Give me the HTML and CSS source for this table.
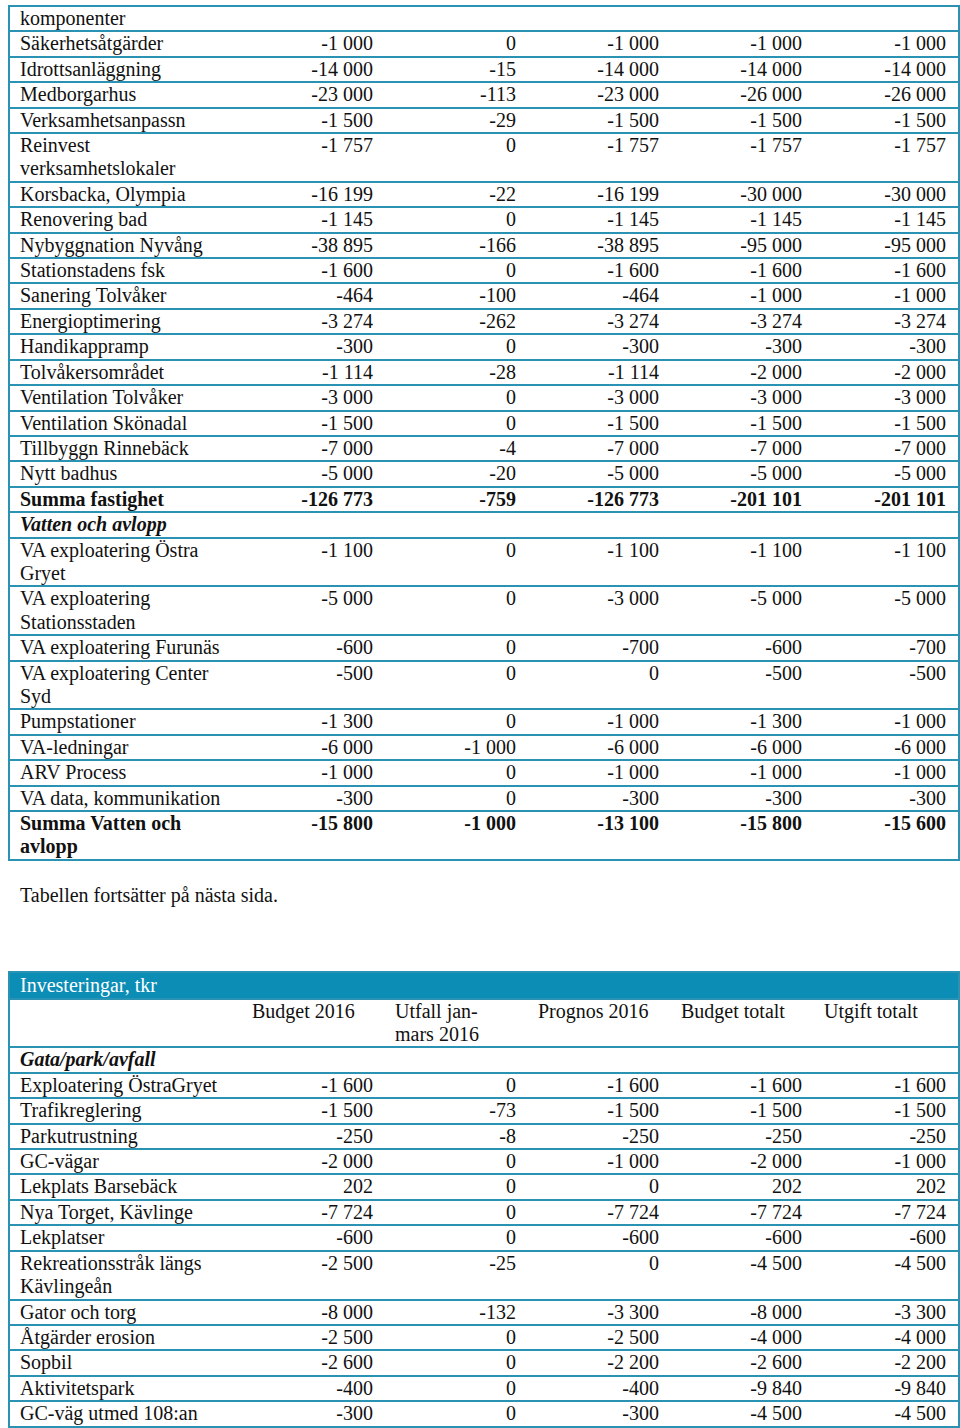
FILE: index.html
```html
<!DOCTYPE html>
<html lang="sv">
<head>
<meta charset="utf-8">
<title>Investeringar, tkr</title>
<link rel="stylesheet" href="styles.css">
</head>
<body>
<div class="page">
  <table class="budget">
    <colgroup>
      <col class="c-lbl"><col class="c-num"><col class="c-num"><col class="c-num"><col class="c-num"><col class="c-last">
    </colgroup>
    <tbody>
      <tr><td class="lbl">komponenter</td><td></td><td></td><td></td><td></td><td></td></tr>
      <tr><td class="lbl">Säkerhetsåtgärder</td><td class="num">-1 000</td><td class="num">0</td><td class="num">-1 000</td><td class="num">-1 000</td><td class="num">-1 000</td></tr>
      <tr><td class="lbl">Idrottsanläggning</td><td class="num">-14 000</td><td class="num">-15</td><td class="num">-14 000</td><td class="num">-14 000</td><td class="num">-14 000</td></tr>
      <tr><td class="lbl">Medborgarhus</td><td class="num">-23 000</td><td class="num">-113</td><td class="num">-23 000</td><td class="num">-26 000</td><td class="num">-26 000</td></tr>
      <tr><td class="lbl">Verksamhetsanpassn</td><td class="num">-1 500</td><td class="num">-29</td><td class="num">-1 500</td><td class="num">-1 500</td><td class="num">-1 500</td></tr>
      <tr><td class="lbl">Reinvest verksamhetslokaler</td><td class="num">-1 757</td><td class="num">0</td><td class="num">-1 757</td><td class="num">-1 757</td><td class="num">-1 757</td></tr>
      <tr><td class="lbl">Korsbacka, Olympia</td><td class="num">-16 199</td><td class="num">-22</td><td class="num">-16 199</td><td class="num">-30 000</td><td class="num">-30 000</td></tr>
      <tr><td class="lbl">Renovering bad</td><td class="num">-1 145</td><td class="num">0</td><td class="num">-1 145</td><td class="num">-1 145</td><td class="num">-1 145</td></tr>
      <tr><td class="lbl">Nybyggnation Nyvång</td><td class="num">-38 895</td><td class="num">-166</td><td class="num">-38 895</td><td class="num">-95 000</td><td class="num">-95 000</td></tr>
      <tr><td class="lbl">Stationstadens fsk</td><td class="num">-1 600</td><td class="num">0</td><td class="num">-1 600</td><td class="num">-1 600</td><td class="num">-1 600</td></tr>
      <tr><td class="lbl">Sanering Tolvåker</td><td class="num">-464</td><td class="num">-100</td><td class="num">-464</td><td class="num">-1 000</td><td class="num">-1 000</td></tr>
      <tr><td class="lbl">Energioptimering</td><td class="num">-3 274</td><td class="num">-262</td><td class="num">-3 274</td><td class="num">-3 274</td><td class="num">-3 274</td></tr>
      <tr><td class="lbl">Handikappramp</td><td class="num">-300</td><td class="num">0</td><td class="num">-300</td><td class="num">-300</td><td class="num">-300</td></tr>
      <tr><td class="lbl">Tolvåkersområdet</td><td class="num">-1 114</td><td class="num">-28</td><td class="num">-1 114</td><td class="num">-2 000</td><td class="num">-2 000</td></tr>
      <tr><td class="lbl">Ventilation Tolvåker</td><td class="num">-3 000</td><td class="num">0</td><td class="num">-3 000</td><td class="num">-3 000</td><td class="num">-3 000</td></tr>
      <tr><td class="lbl">Ventilation Skönadal</td><td class="num">-1 500</td><td class="num">0</td><td class="num">-1 500</td><td class="num">-1 500</td><td class="num">-1 500</td></tr>
      <tr><td class="lbl">Tillbyggn Rinnebäck</td><td class="num">-7 000</td><td class="num">-4</td><td class="num">-7 000</td><td class="num">-7 000</td><td class="num">-7 000</td></tr>
      <tr><td class="lbl">Nytt badhus</td><td class="num">-5 000</td><td class="num">-20</td><td class="num">-5 000</td><td class="num">-5 000</td><td class="num">-5 000</td></tr>
      <tr class="sum"><td class="lbl">Summa fastighet</td><td class="num">-126 773</td><td class="num">-759</td><td class="num">-126 773</td><td class="num">-201 101</td><td class="num">-201 101</td></tr>
      <tr class="section"><td class="lbl">Vatten och avlopp</td><td></td><td></td><td></td><td></td><td></td></tr>
      <tr><td class="lbl">VA exploatering Östra Gryet</td><td class="num">-1 100</td><td class="num">0</td><td class="num">-1 100</td><td class="num">-1 100</td><td class="num">-1 100</td></tr>
      <tr><td class="lbl">VA exploatering Stationsstaden</td><td class="num">-5 000</td><td class="num">0</td><td class="num">-3 000</td><td class="num">-5 000</td><td class="num">-5 000</td></tr>
      <tr><td class="lbl">VA exploatering Furunäs</td><td class="num">-600</td><td class="num">0</td><td class="num">-700</td><td class="num">-600</td><td class="num">-700</td></tr>
      <tr><td class="lbl">VA exploatering Center Syd</td><td class="num">-500</td><td class="num">0</td><td class="num">0</td><td class="num">-500</td><td class="num">-500</td></tr>
      <tr><td class="lbl">Pumpstationer</td><td class="num">-1 300</td><td class="num">0</td><td class="num">-1 000</td><td class="num">-1 300</td><td class="num">-1 000</td></tr>
      <tr><td class="lbl">VA-ledningar</td><td class="num">-6 000</td><td class="num">-1 000</td><td class="num">-6 000</td><td class="num">-6 000</td><td class="num">-6 000</td></tr>
      <tr><td class="lbl">ARV Process</td><td class="num">-1 000</td><td class="num">0</td><td class="num">-1 000</td><td class="num">-1 000</td><td class="num">-1 000</td></tr>
      <tr><td class="lbl">VA data, kommunikation</td><td class="num">-300</td><td class="num">0</td><td class="num">-300</td><td class="num">-300</td><td class="num">-300</td></tr>
      <tr class="sum"><td class="lbl">Summa Vatten och avlopp</td><td class="num">-15 800</td><td class="num">-1 000</td><td class="num">-13 100</td><td class="num">-15 800</td><td class="num">-15 600</td></tr>
    </tbody>
  </table>

  <p class="note">Tabellen fortsätter på nästa sida.</p>

  <table class="budget second">
    <colgroup>
      <col class="c-lbl"><col class="c-num"><col class="c-num"><col class="c-num"><col class="c-num"><col class="c-last">
    </colgroup>
    <thead>
      <tr class="title"><th colspan="6">Investeringar, tkr</th></tr>
      <tr class="colhead"><th></th><th>Budget 2016</th><th>Utfall jan-<br>mars 2016</th><th>Prognos 2016</th><th>Budget totalt</th><th>Utgift totalt</th></tr>
    </thead>
    <tbody>
      <tr class="section"><td class="lbl">Gata/park/avfall</td><td></td><td></td><td></td><td></td><td></td></tr>
      <tr><td class="lbl">Exploatering ÖstraGryet</td><td class="num">-1 600</td><td class="num">0</td><td class="num">-1 600</td><td class="num">-1 600</td><td class="num">-1 600</td></tr>
      <tr><td class="lbl">Trafikreglering</td><td class="num">-1 500</td><td class="num">-73</td><td class="num">-1 500</td><td class="num">-1 500</td><td class="num">-1 500</td></tr>
      <tr><td class="lbl">Parkutrustning</td><td class="num">-250</td><td class="num">-8</td><td class="num">-250</td><td class="num">-250</td><td class="num">-250</td></tr>
      <tr><td class="lbl">GC-vägar</td><td class="num">-2 000</td><td class="num">0</td><td class="num">-1 000</td><td class="num">-2 000</td><td class="num">-1 000</td></tr>
      <tr><td class="lbl">Lekplats Barsebäck</td><td class="num">202</td><td class="num">0</td><td class="num">0</td><td class="num">202</td><td class="num">202</td></tr>
      <tr><td class="lbl">Nya Torget, Kävlinge</td><td class="num">-7 724</td><td class="num">0</td><td class="num">-7 724</td><td class="num">-7 724</td><td class="num">-7 724</td></tr>
      <tr><td class="lbl">Lekplatser</td><td class="num">-600</td><td class="num">0</td><td class="num">-600</td><td class="num">-600</td><td class="num">-600</td></tr>
      <tr><td class="lbl">Rekreationsstråk längs Kävlingeån</td><td class="num">-2 500</td><td class="num">-25</td><td class="num">0</td><td class="num">-4 500</td><td class="num">-4 500</td></tr>
      <tr><td class="lbl">Gator och torg</td><td class="num">-8 000</td><td class="num">-132</td><td class="num">-3 300</td><td class="num">-8 000</td><td class="num">-3 300</td></tr>
      <tr><td class="lbl">Åtgärder erosion</td><td class="num">-2 500</td><td class="num">0</td><td class="num">-2 500</td><td class="num">-4 000</td><td class="num">-4 000</td></tr>
      <tr><td class="lbl">Sopbil</td><td class="num">-2 600</td><td class="num">0</td><td class="num">-2 200</td><td class="num">-2 600</td><td class="num">-2 200</td></tr>
      <tr><td class="lbl">Aktivitetspark</td><td class="num">-400</td><td class="num">0</td><td class="num">-400</td><td class="num">-9 840</td><td class="num">-9 840</td></tr>
      <tr><td class="lbl">GC-väg utmed 108:an</td><td class="num">-300</td><td class="num">0</td><td class="num">-300</td><td class="num">-4 500</td><td class="num">-4 500</td></tr>
    </tbody>
  </table>
</div>
</body>
</html>
```

FILE: styles.css
```css
html, body {
  margin: 0;
  padding: 0;
  background: #ffffff;
}

body {
  font-family: "Liberation Serif", "Times New Roman", serif;
  font-size: 20px;
  line-height: 23.4px;
  color: #111111;
}

.page {
  padding: 5px 0 0 8px;
}

.budget {
  width: 950px;
  table-layout: fixed;
  border-collapse: collapse;
  border: 2px solid #2a92b3;
}

.c-lbl { width: 233px; }
.c-num { width: 143px; }
.c-last { width: 145px; }

.budget td,
.budget th {
  padding: 0 12px 0 10px;
  border-top: 2px solid #2a92b3;
  border-bottom: 2px solid #2a92b3;
  vertical-align: top;
  font-weight: normal;
  text-align: left;
}

.budget .lbl {
  padding-right: 8px;
}

.budget .num {
  text-align: right;
  white-space: nowrap;
}

.sum td {
  font-weight: bold;
}

.section td {
  font-weight: bold;
  font-style: italic;
}

.title th {
  background: #0b8db5;
  color: #ffffff;
  padding-top: 1px;
  padding-bottom: 0;
}

.note {
  margin: 23px 0 64px 12px;
}
```
